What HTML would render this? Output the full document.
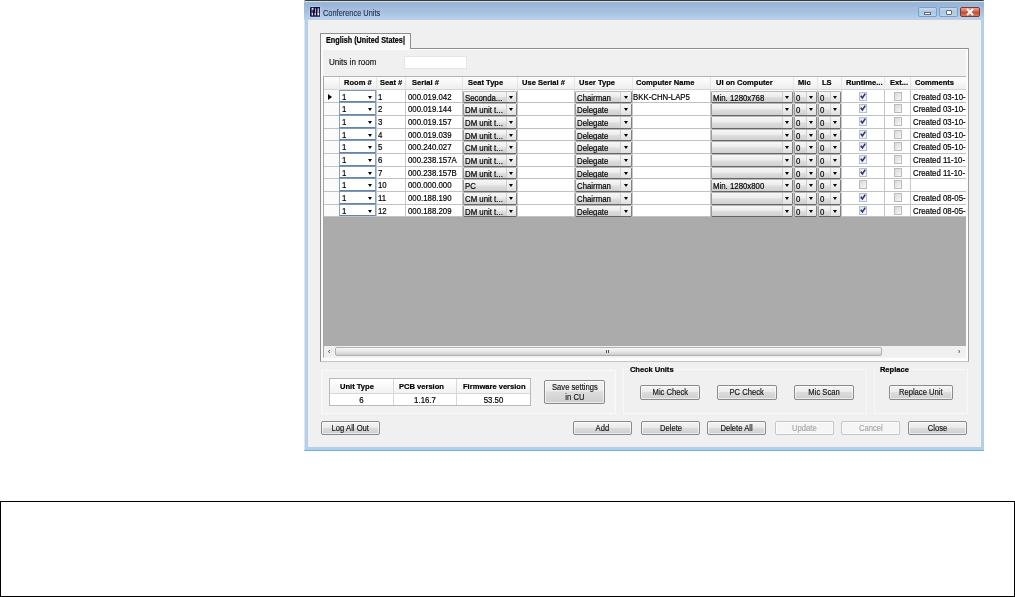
<!DOCTYPE html><html><head><meta charset="utf-8"><title>Conference Units</title><style>
html,body{margin:0;padding:0;background:#fff;}
body{width:1015px;height:597px;position:relative;overflow:hidden;font-family:"Liberation Sans",sans-serif;font-size:8px;color:#000;}
div,span{box-sizing:border-box;}
.a{position:absolute;white-space:nowrap;}
.wrap{left:0;top:0;width:1015px;height:470px;filter:blur(.4px);}
.win{left:304px;top:0;width:680px;height:451px;background:#b4cfe9;box-shadow:inset 1px 0 0 #dde8f2;border-top:1px solid #3a3a3a;border-radius:2px 1px 0 0;}
.tbar{left:0;top:0;width:680px;height:19px;background:linear-gradient(#98b6d6 0%,#9ab7d8 22%,#a8bcdb 36%,#a3bee0 50%,#b3cfec 88%,#c0d0e8 100%);border-top:1px solid #d3e1ec;border-radius:2px 1px 0 0;}
.client{left:4px;top:19px;width:673px;height:427px;background:#f0f0f0;}
.bot{left:0;top:449px;width:680px;height:1px;background:#62b8d8;}
.title{left:19px;top:6px;font-size:9.4px;line-height:12px;color:#1b2b44;-webkit-text-stroke:.1px #1b2b44;transform-origin:0 0;transform:scaleX(.79);}
.btn{border:1px solid #8a8a8a;border-radius:2px;background:linear-gradient(#f4f4f4 0%,#ebebeb 45%,#dcdcdc 50%,#cfcfcf 100%);text-align:center;font-size:8px;color:#111;box-shadow:inset 0 0 0 1px rgba(255,255,255,.6);}
.btn span{display:inline-block;font-size:8.3px;transform:scaleX(.92);-webkit-text-stroke:.15px currentColor;}
.btn.dis{color:#a5a5a5;border-color:#c6c6c6;background:#f5f5f5;}
.hd{font-weight:bold;font-size:8px;line-height:14px;color:#000;transform-origin:0 50%;transform:scaleX(.945);-webkit-text-stroke:.2px #000;}
.hd.c{transform-origin:50% 50%;}
.cell{font-size:8.6px;line-height:12px;color:#000;-webkit-text-stroke:.2px #000;transform-origin:0 50%;transform:scaleX(.91);}
.cell.c{transform-origin:50% 50%;}
.cbx{border:1px solid #9a9a9a;border-top-color:#b8b8b8;border-right-color:#808080;border-bottom-color:#666;border-radius:1.5px;background:linear-gradient(#f7f7f7 0%,#ececec 45%,#dedede 55%,#d0d0d0 100%);overflow:hidden;}
.cbt{font-size:8.6px;line-height:10px;color:#000;-webkit-text-stroke:.2px #000;left:.7px;top:0.6px;transform-origin:0 50%;transform:scaleX(.91);}
.cba{top:0;right:0;height:100%;background:linear-gradient(#f8f8f8,#ededed 50%,#e0e0e0);border-left:1px solid #cfcfcf;}
.arr{width:0;height:0;border-left:2.8px solid transparent;border-right:2.8px solid transparent;border-top:3.2px solid #000;}
.chk{width:8px;height:8.5px;border:1px solid #b4bfd4;background:linear-gradient(135deg,#dde3ee,#f7f9fc);}
.chk.off{border-color:#bcbcbc;background:linear-gradient(135deg,#dadada,#f6f6f6);}
</style></head><body>
<div class="a wrap">
<div class="a win">
<div class="a tbar"></div>
<svg class="a" style="left:5.5px;top:6.2px;filter:drop-shadow(0 0 1.2px rgba(225,235,250,.9))" width="10.5" height="9.8" viewBox="0 0 10.5 9.8"><rect x="0" y="0" width="10.5" height="9.8" rx="1" fill="#10103c"/><rect x="1.6" y="0.9" width="1.9" height="1.9" fill="#e6e6fa"/><rect x="1.6" y="2.6" width=".9" height="5.8" fill="#8d8fc4"/><rect x="5" y="1.3" width=".9" height="4.4" fill="#b9bbe8"/><rect x="7.5" y="1.3" width="1.6" height="4.4" fill="#b4b6e4"/><rect x="1.8" y="6" width="1.2" height="2.4" fill="#d8d8f4"/><rect x="4.5" y="6" width="1.3" height="2.4" fill="#dedef6"/><rect x="7.4" y="5.8" width="1.8" height="2.6" fill="#f4f4ff"/></svg>
<div class="a title">Conference Units</div>
<div class="a" style="left:614px;top:6px;width:19px;height:10px;border:1px solid #7f9fc2;border-radius:2px;background:linear-gradient(#c7dbf0,#a9c6e6 50%,#bcd5ee);"></div>
<div class="a" style="left:620px;top:11px;width:7px;height:3px;background:#fff;border:0.5px solid #667;"></div>
<div class="a" style="left:635px;top:6px;width:19px;height:10px;border:1px solid #7f9fc2;border-radius:2px;background:linear-gradient(#c7dbf0,#a9c6e6 50%,#bcd5ee);"></div>
<div class="a" style="left:642px;top:8.5px;width:6px;height:5px;background:#fff;border:1px solid #667;border-radius:1px;"></div>
<div class="a" style="left:656px;top:6px;width:20px;height:10px;border:1px solid #7a3a30;border-radius:2px;background:linear-gradient(#e9a48f,#d2624a 45%,#c2432a 50%,#d8795a);"></div>
<svg class="a" style="left:662px;top:7px" width="8" height="8" viewBox="0 0 8 8"><path d="M1 1 L7 7 M7 1 L1 7" stroke="#fff" stroke-width="2"/></svg>
<div class="a client"></div>
<div class="a bot"></div>
</div>
<div class="a" style="left:320px;top:48px;width:649px;height:314px;border:1px solid #8e8e8e;border-bottom-color:#c4c4c4;border-right-color:#a0a0a0;background:#fcfcfc;"></div>
<div class="a" style="left:323px;top:50px;width:643px;height:308px;background:#f0f0f0;"></div>
<div class="a" style="left:320px;top:33px;width:91px;height:16px;border:1px solid #8e8e8e;border-bottom:none;background:#fafafa;"></div>
<div class="a hd" style="left:326px;top:34px;font-size:8.2px;line-height:14px;transform-origin:0 0;transform:scaleX(.885)">English (United States|</div>
<div class="a" style="left:329px;top:56px;font-size:8.8px;line-height:12px;color:#111;-webkit-text-stroke:.15px #111;transform-origin:0 50%;transform:scaleX(.917);">Units in room</div>
<div class="a" style="left:404px;top:56px;width:63px;height:13px;background:#fff;border:1px solid #e2e6ea;"></div>
<div class="a" style="left:323px;top:76px;width:643px;height:282px;background:#ababab;border:1px solid #8c8c8c;border-top-color:#b4b4b4;border-left-color:#a4a4a4;border-right:none;border-bottom-color:#f4f4f4;"></div>
<div class="a" style="left:324px;top:77px;width:642px;height:13px;background:linear-gradient(#ffffff,#f4f5f6 60%,#eceef0);border-bottom:1px solid #d5d5d5;"></div>
<div class="a" style="left:324px;top:90px;width:642px;height:126px;background:#fff;"></div>
<div class="a" style="left:324px;top:90px;width:15px;height:126px;background:#fbfbfb;"></div>
<div class="a hd" style="left:344px;top:76.3px;">Room #</div>
<div class="a hd" style="left:380px;top:76.3px;">Seat #</div>
<div class="a hd" style="left:411.5px;top:76.3px;">Serial #</div>
<div class="a hd" style="left:468px;top:76.3px;">Seat Type</div>
<div class="a hd" style="left:521.5px;top:76.3px;">Use Serial #</div>
<div class="a hd" style="left:578.5px;top:76.3px;">User Type</div>
<div class="a hd" style="left:635.5px;top:76.3px;">Computer Name</div>
<div class="a hd" style="left:715.5px;top:76.3px;">UI on Computer</div>
<div class="a hd" style="left:797.8px;top:76.3px;">Mic</div>
<div class="a hd" style="left:822px;top:76.3px;">LS</div>
<div class="a hd" style="left:846px;top:76.3px;">Runtime...</div>
<div class="a hd" style="left:889.8px;top:76.3px;">Ext...</div>
<div class="a hd" style="left:915px;top:76.3px;">Comments</div>
<div class="a" style="left:339px;top:77px;width:1px;height:13px;background:#e3e4e6;"></div>
<div class="a" style="left:376px;top:77px;width:1px;height:13px;background:#e3e4e6;"></div>
<div class="a" style="left:405px;top:77px;width:1px;height:13px;background:#e3e4e6;"></div>
<div class="a" style="left:462px;top:77px;width:1px;height:13px;background:#e3e4e6;"></div>
<div class="a" style="left:517px;top:77px;width:1px;height:13px;background:#e3e4e6;"></div>
<div class="a" style="left:574px;top:77px;width:1px;height:13px;background:#e3e4e6;"></div>
<div class="a" style="left:632px;top:77px;width:1px;height:13px;background:#e3e4e6;"></div>
<div class="a" style="left:710px;top:77px;width:1px;height:13px;background:#e3e4e6;"></div>
<div class="a" style="left:793px;top:77px;width:1px;height:13px;background:#e3e4e6;"></div>
<div class="a" style="left:817px;top:77px;width:1px;height:13px;background:#e3e4e6;"></div>
<div class="a" style="left:841px;top:77px;width:1px;height:13px;background:#e3e4e6;"></div>
<div class="a" style="left:884px;top:77px;width:1px;height:13px;background:#e3e4e6;"></div>
<div class="a" style="left:910px;top:77px;width:1px;height:13px;background:#e3e4e6;"></div>
<div class="a" style="left:324px;top:102px;width:642px;height:1px;background:#c2c2c2;"></div>
<div class="a" style="left:324px;top:115px;width:642px;height:1px;background:#c2c2c2;"></div>
<div class="a" style="left:324px;top:128px;width:642px;height:1px;background:#c2c2c2;"></div>
<div class="a" style="left:324px;top:140px;width:642px;height:1px;background:#c2c2c2;"></div>
<div class="a" style="left:324px;top:153px;width:642px;height:1px;background:#c2c2c2;"></div>
<div class="a" style="left:324px;top:166px;width:642px;height:1px;background:#c2c2c2;"></div>
<div class="a" style="left:324px;top:178px;width:642px;height:1px;background:#c2c2c2;"></div>
<div class="a" style="left:324px;top:191px;width:642px;height:1px;background:#c2c2c2;"></div>
<div class="a" style="left:324px;top:204px;width:642px;height:1px;background:#c2c2c2;"></div>
<div class="a" style="left:324px;top:216px;width:642px;height:1px;background:#c2c2c2;"></div>
<div class="a" style="left:339px;top:90px;width:1px;height:126px;background:#c6c6c6;"></div>
<div class="a" style="left:376px;top:90px;width:1px;height:126px;background:#c6c6c6;"></div>
<div class="a" style="left:405px;top:90px;width:1px;height:126px;background:#c6c6c6;"></div>
<div class="a" style="left:462px;top:90px;width:1px;height:126px;background:#c6c6c6;"></div>
<div class="a" style="left:517px;top:90px;width:1px;height:126px;background:#c6c6c6;"></div>
<div class="a" style="left:574px;top:90px;width:1px;height:126px;background:#c6c6c6;"></div>
<div class="a" style="left:632px;top:90px;width:1px;height:126px;background:#c6c6c6;"></div>
<div class="a" style="left:710px;top:90px;width:1px;height:126px;background:#c6c6c6;"></div>
<div class="a" style="left:793px;top:90px;width:1px;height:126px;background:#c6c6c6;"></div>
<div class="a" style="left:817px;top:90px;width:1px;height:126px;background:#c6c6c6;"></div>
<div class="a" style="left:841px;top:90px;width:1px;height:126px;background:#c6c6c6;"></div>
<div class="a" style="left:884px;top:90px;width:1px;height:126px;background:#c6c6c6;"></div>
<div class="a" style="left:910px;top:90px;width:1px;height:126px;background:#c6c6c6;"></div>
<div class="a" style="left:328px;top:94.3px;width:0;height:0;border-top:3px solid transparent;border-bottom:3px solid transparent;border-left:4px solid #000;"></div>
<div class="a" style="left:339px;top:90px;width:37px;height:12px;background:#fff;border:1px solid #8aa2bb;border-bottom-color:#6686a8;border-top-color:#7d98b5;"></div>
<div class="a cell" style="left:342px;top:91px;">1</div>
<div class="a arr" style="left:367.5px;top:95.7px;"></div>
<div class="a cell" style="left:378px;top:91px;">1</div>
<div class="a cell" style="left:408px;top:91px;">000.019.042</div>
<div class="a cbx" style="left:463px;top:91px;width:54px;height:12px;"><div class="a cbt">Seconda...</div><div class="a cba" style="width:10px;"></div></div>
<div class="a arr" style="left:509.0px;top:95.5px;"></div>
<div class="a cbx" style="left:575px;top:91px;width:57px;height:12px;"><div class="a cbt">Chairman</div><div class="a cba" style="width:11px;"></div></div>
<div class="a arr" style="left:623.5px;top:95.5px;"></div>
<div class="a cell" style="left:633px;top:91px;">BKK-CHN-LAP5</div>
<div class="a cbx" style="left:711px;top:91px;width:82px;height:12px;"><div class="a cbt">Min. 1280x768</div><div class="a cba" style="width:10px;"></div></div>
<div class="a arr" style="left:785.0px;top:95.5px;"></div>
<div class="a cbx" style="left:794px;top:91px;width:23px;height:12px;"><div class="a cbt">0</div><div class="a cba" style="width:10px;"></div></div>
<div class="a arr" style="left:809.0px;top:95.5px;"></div>
<div class="a cbx" style="left:818px;top:91px;width:23px;height:12px;"><div class="a cbt">0</div><div class="a cba" style="width:10px;"></div></div>
<div class="a arr" style="left:833.0px;top:95.5px;"></div>
<div class="a chk" style="left:859px;top:92px;"></div>
<svg class="a" style="left:859px;top:92px" width="8" height="8" viewBox="0 0 8 8"><path d="M1.8 3.8 L3.4 6 L6.3 1.6" fill="none" stroke="#2b2f75" stroke-width="1.5"/></svg>
<div class="a chk off" style="left:893.5px;top:92px;"></div>
<div class="a cell" style="left:913px;top:91px;width:58.2px;overflow:hidden;">Created 03-10-</div>
<div class="a" style="left:339px;top:102px;width:37px;height:13px;background:#fff;border:1px solid #8aa2bb;border-bottom-color:#6686a8;border-top-color:#7d98b5;"></div>
<div class="a cell" style="left:342px;top:103px;">1</div>
<div class="a arr" style="left:367.5px;top:107.7px;"></div>
<div class="a cell" style="left:378px;top:103px;">2</div>
<div class="a cell" style="left:408px;top:103px;">000.019.144</div>
<div class="a cbx" style="left:463px;top:103px;width:54px;height:13px;"><div class="a cbt">DM unit t...</div><div class="a cba" style="width:10px;"></div></div>
<div class="a arr" style="left:509.0px;top:107.5px;"></div>
<div class="a cbx" style="left:575px;top:103px;width:57px;height:13px;"><div class="a cbt">Delegate</div><div class="a cba" style="width:11px;"></div></div>
<div class="a arr" style="left:623.5px;top:107.5px;"></div>
<div class="a cell" style="left:633px;top:103px;"></div>
<div class="a cbx" style="left:711px;top:103px;width:82px;height:13px;"><div class="a cbt"></div><div class="a cba" style="width:10px;"></div></div>
<div class="a arr" style="left:785.0px;top:107.5px;"></div>
<div class="a cbx" style="left:794px;top:103px;width:23px;height:13px;"><div class="a cbt">0</div><div class="a cba" style="width:10px;"></div></div>
<div class="a arr" style="left:809.0px;top:107.5px;"></div>
<div class="a cbx" style="left:818px;top:103px;width:23px;height:13px;"><div class="a cbt">0</div><div class="a cba" style="width:10px;"></div></div>
<div class="a arr" style="left:833.0px;top:107.5px;"></div>
<div class="a chk" style="left:859px;top:104px;"></div>
<svg class="a" style="left:859px;top:104px" width="8" height="8" viewBox="0 0 8 8"><path d="M1.8 3.8 L3.4 6 L6.3 1.6" fill="none" stroke="#2b2f75" stroke-width="1.5"/></svg>
<div class="a chk off" style="left:893.5px;top:104px;"></div>
<div class="a cell" style="left:913px;top:103px;width:58.2px;overflow:hidden;">Created 03-10-</div>
<div class="a" style="left:339px;top:115px;width:37px;height:13px;background:#fff;border:1px solid #8aa2bb;border-bottom-color:#6686a8;border-top-color:#7d98b5;"></div>
<div class="a cell" style="left:342px;top:116px;">1</div>
<div class="a arr" style="left:367.5px;top:120.7px;"></div>
<div class="a cell" style="left:378px;top:116px;">3</div>
<div class="a cell" style="left:408px;top:116px;">000.019.157</div>
<div class="a cbx" style="left:463px;top:116px;width:54px;height:13px;"><div class="a cbt">DM unit t...</div><div class="a cba" style="width:10px;"></div></div>
<div class="a arr" style="left:509.0px;top:120.5px;"></div>
<div class="a cbx" style="left:575px;top:116px;width:57px;height:13px;"><div class="a cbt">Delegate</div><div class="a cba" style="width:11px;"></div></div>
<div class="a arr" style="left:623.5px;top:120.5px;"></div>
<div class="a cell" style="left:633px;top:116px;"></div>
<div class="a cbx" style="left:711px;top:116px;width:82px;height:13px;"><div class="a cbt"></div><div class="a cba" style="width:10px;"></div></div>
<div class="a arr" style="left:785.0px;top:120.5px;"></div>
<div class="a cbx" style="left:794px;top:116px;width:23px;height:13px;"><div class="a cbt">0</div><div class="a cba" style="width:10px;"></div></div>
<div class="a arr" style="left:809.0px;top:120.5px;"></div>
<div class="a cbx" style="left:818px;top:116px;width:23px;height:13px;"><div class="a cbt">0</div><div class="a cba" style="width:10px;"></div></div>
<div class="a arr" style="left:833.0px;top:120.5px;"></div>
<div class="a chk" style="left:859px;top:117px;"></div>
<svg class="a" style="left:859px;top:117px" width="8" height="8" viewBox="0 0 8 8"><path d="M1.8 3.8 L3.4 6 L6.3 1.6" fill="none" stroke="#2b2f75" stroke-width="1.5"/></svg>
<div class="a chk off" style="left:893.5px;top:117px;"></div>
<div class="a cell" style="left:913px;top:116px;width:58.2px;overflow:hidden;">Created 03-10-</div>
<div class="a" style="left:339px;top:128px;width:37px;height:12px;background:#fff;border:1px solid #8aa2bb;border-bottom-color:#6686a8;border-top-color:#7d98b5;"></div>
<div class="a cell" style="left:342px;top:129px;">1</div>
<div class="a arr" style="left:367.5px;top:133.7px;"></div>
<div class="a cell" style="left:378px;top:129px;">4</div>
<div class="a cell" style="left:408px;top:129px;">000.019.039</div>
<div class="a cbx" style="left:463px;top:129px;width:54px;height:12px;"><div class="a cbt">DM unit t...</div><div class="a cba" style="width:10px;"></div></div>
<div class="a arr" style="left:509.0px;top:133.5px;"></div>
<div class="a cbx" style="left:575px;top:129px;width:57px;height:12px;"><div class="a cbt">Delegate</div><div class="a cba" style="width:11px;"></div></div>
<div class="a arr" style="left:623.5px;top:133.5px;"></div>
<div class="a cell" style="left:633px;top:129px;"></div>
<div class="a cbx" style="left:711px;top:129px;width:82px;height:12px;"><div class="a cbt"></div><div class="a cba" style="width:10px;"></div></div>
<div class="a arr" style="left:785.0px;top:133.5px;"></div>
<div class="a cbx" style="left:794px;top:129px;width:23px;height:12px;"><div class="a cbt">0</div><div class="a cba" style="width:10px;"></div></div>
<div class="a arr" style="left:809.0px;top:133.5px;"></div>
<div class="a cbx" style="left:818px;top:129px;width:23px;height:12px;"><div class="a cbt">0</div><div class="a cba" style="width:10px;"></div></div>
<div class="a arr" style="left:833.0px;top:133.5px;"></div>
<div class="a chk" style="left:859px;top:130px;"></div>
<svg class="a" style="left:859px;top:130px" width="8" height="8" viewBox="0 0 8 8"><path d="M1.8 3.8 L3.4 6 L6.3 1.6" fill="none" stroke="#2b2f75" stroke-width="1.5"/></svg>
<div class="a chk off" style="left:893.5px;top:130px;"></div>
<div class="a cell" style="left:913px;top:129px;width:58.2px;overflow:hidden;">Created 03-10-</div>
<div class="a" style="left:339px;top:140px;width:37px;height:13px;background:#fff;border:1px solid #8aa2bb;border-bottom-color:#6686a8;border-top-color:#7d98b5;"></div>
<div class="a cell" style="left:342px;top:141px;">1</div>
<div class="a arr" style="left:367.5px;top:145.7px;"></div>
<div class="a cell" style="left:378px;top:141px;">5</div>
<div class="a cell" style="left:408px;top:141px;">000.240.027</div>
<div class="a cbx" style="left:463px;top:141px;width:54px;height:13px;"><div class="a cbt">CM unit t...</div><div class="a cba" style="width:10px;"></div></div>
<div class="a arr" style="left:509.0px;top:145.5px;"></div>
<div class="a cbx" style="left:575px;top:141px;width:57px;height:13px;"><div class="a cbt">Delegate</div><div class="a cba" style="width:11px;"></div></div>
<div class="a arr" style="left:623.5px;top:145.5px;"></div>
<div class="a cell" style="left:633px;top:141px;"></div>
<div class="a cbx" style="left:711px;top:141px;width:82px;height:13px;"><div class="a cbt"></div><div class="a cba" style="width:10px;"></div></div>
<div class="a arr" style="left:785.0px;top:145.5px;"></div>
<div class="a cbx" style="left:794px;top:141px;width:23px;height:13px;"><div class="a cbt">0</div><div class="a cba" style="width:10px;"></div></div>
<div class="a arr" style="left:809.0px;top:145.5px;"></div>
<div class="a cbx" style="left:818px;top:141px;width:23px;height:13px;"><div class="a cbt">0</div><div class="a cba" style="width:10px;"></div></div>
<div class="a arr" style="left:833.0px;top:145.5px;"></div>
<div class="a chk" style="left:859px;top:142px;"></div>
<svg class="a" style="left:859px;top:142px" width="8" height="8" viewBox="0 0 8 8"><path d="M1.8 3.8 L3.4 6 L6.3 1.6" fill="none" stroke="#2b2f75" stroke-width="1.5"/></svg>
<div class="a chk off" style="left:893.5px;top:142px;"></div>
<div class="a cell" style="left:913px;top:141px;width:58.2px;overflow:hidden;">Created 05-10-</div>
<div class="a" style="left:339px;top:153px;width:37px;height:13px;background:#fff;border:1px solid #8aa2bb;border-bottom-color:#6686a8;border-top-color:#7d98b5;"></div>
<div class="a cell" style="left:342px;top:154px;">1</div>
<div class="a arr" style="left:367.5px;top:158.7px;"></div>
<div class="a cell" style="left:378px;top:154px;">6</div>
<div class="a cell" style="left:408px;top:154px;">000.238.157A</div>
<div class="a cbx" style="left:463px;top:154px;width:54px;height:13px;"><div class="a cbt">DM unit t...</div><div class="a cba" style="width:10px;"></div></div>
<div class="a arr" style="left:509.0px;top:158.5px;"></div>
<div class="a cbx" style="left:575px;top:154px;width:57px;height:13px;"><div class="a cbt">Delegate</div><div class="a cba" style="width:11px;"></div></div>
<div class="a arr" style="left:623.5px;top:158.5px;"></div>
<div class="a cell" style="left:633px;top:154px;"></div>
<div class="a cbx" style="left:711px;top:154px;width:82px;height:13px;"><div class="a cbt"></div><div class="a cba" style="width:10px;"></div></div>
<div class="a arr" style="left:785.0px;top:158.5px;"></div>
<div class="a cbx" style="left:794px;top:154px;width:23px;height:13px;"><div class="a cbt">0</div><div class="a cba" style="width:10px;"></div></div>
<div class="a arr" style="left:809.0px;top:158.5px;"></div>
<div class="a cbx" style="left:818px;top:154px;width:23px;height:13px;"><div class="a cbt">0</div><div class="a cba" style="width:10px;"></div></div>
<div class="a arr" style="left:833.0px;top:158.5px;"></div>
<div class="a chk" style="left:859px;top:155px;"></div>
<svg class="a" style="left:859px;top:155px" width="8" height="8" viewBox="0 0 8 8"><path d="M1.8 3.8 L3.4 6 L6.3 1.6" fill="none" stroke="#2b2f75" stroke-width="1.5"/></svg>
<div class="a chk off" style="left:893.5px;top:155px;"></div>
<div class="a cell" style="left:913px;top:154px;width:58.2px;overflow:hidden;">Created 11-10-</div>
<div class="a" style="left:339px;top:166px;width:37px;height:12px;background:#fff;border:1px solid #8aa2bb;border-bottom-color:#6686a8;border-top-color:#7d98b5;"></div>
<div class="a cell" style="left:342px;top:167px;">1</div>
<div class="a arr" style="left:367.5px;top:171.7px;"></div>
<div class="a cell" style="left:378px;top:167px;">7</div>
<div class="a cell" style="left:408px;top:167px;">000.238.157B</div>
<div class="a cbx" style="left:463px;top:167px;width:54px;height:12px;"><div class="a cbt">DM unit t...</div><div class="a cba" style="width:10px;"></div></div>
<div class="a arr" style="left:509.0px;top:171.5px;"></div>
<div class="a cbx" style="left:575px;top:167px;width:57px;height:12px;"><div class="a cbt">Delegate</div><div class="a cba" style="width:11px;"></div></div>
<div class="a arr" style="left:623.5px;top:171.5px;"></div>
<div class="a cell" style="left:633px;top:167px;"></div>
<div class="a cbx" style="left:711px;top:167px;width:82px;height:12px;"><div class="a cbt"></div><div class="a cba" style="width:10px;"></div></div>
<div class="a arr" style="left:785.0px;top:171.5px;"></div>
<div class="a cbx" style="left:794px;top:167px;width:23px;height:12px;"><div class="a cbt">0</div><div class="a cba" style="width:10px;"></div></div>
<div class="a arr" style="left:809.0px;top:171.5px;"></div>
<div class="a cbx" style="left:818px;top:167px;width:23px;height:12px;"><div class="a cbt">0</div><div class="a cba" style="width:10px;"></div></div>
<div class="a arr" style="left:833.0px;top:171.5px;"></div>
<div class="a chk" style="left:859px;top:168px;"></div>
<svg class="a" style="left:859px;top:168px" width="8" height="8" viewBox="0 0 8 8"><path d="M1.8 3.8 L3.4 6 L6.3 1.6" fill="none" stroke="#2b2f75" stroke-width="1.5"/></svg>
<div class="a chk off" style="left:893.5px;top:168px;"></div>
<div class="a cell" style="left:913px;top:167px;width:58.2px;overflow:hidden;">Created 11-10-</div>
<div class="a" style="left:339px;top:178px;width:37px;height:13px;background:#fff;border:1px solid #8aa2bb;border-bottom-color:#6686a8;border-top-color:#7d98b5;"></div>
<div class="a cell" style="left:342px;top:179px;">1</div>
<div class="a arr" style="left:367.5px;top:183.7px;"></div>
<div class="a cell" style="left:378px;top:179px;">10</div>
<div class="a cell" style="left:408px;top:179px;">000.000.000</div>
<div class="a cbx" style="left:463px;top:179px;width:54px;height:13px;"><div class="a cbt">PC</div><div class="a cba" style="width:10px;"></div></div>
<div class="a arr" style="left:509.0px;top:183.5px;"></div>
<div class="a cbx" style="left:575px;top:179px;width:57px;height:13px;"><div class="a cbt">Chairman</div><div class="a cba" style="width:11px;"></div></div>
<div class="a arr" style="left:623.5px;top:183.5px;"></div>
<div class="a cell" style="left:633px;top:179px;"></div>
<div class="a cbx" style="left:711px;top:179px;width:82px;height:13px;"><div class="a cbt">Min. 1280x800</div><div class="a cba" style="width:10px;"></div></div>
<div class="a arr" style="left:785.0px;top:183.5px;"></div>
<div class="a cbx" style="left:794px;top:179px;width:23px;height:13px;"><div class="a cbt">0</div><div class="a cba" style="width:10px;"></div></div>
<div class="a arr" style="left:809.0px;top:183.5px;"></div>
<div class="a cbx" style="left:818px;top:179px;width:23px;height:13px;"><div class="a cbt">0</div><div class="a cba" style="width:10px;"></div></div>
<div class="a arr" style="left:833.0px;top:183.5px;"></div>
<div class="a chk off" style="left:859px;top:180px;"></div>
<div class="a chk off" style="left:893.5px;top:180px;"></div>
<div class="a cell" style="left:913px;top:179px;width:58.2px;overflow:hidden;"></div>
<div class="a" style="left:339px;top:191px;width:37px;height:13px;background:#fff;border:1px solid #8aa2bb;border-bottom-color:#6686a8;border-top-color:#7d98b5;"></div>
<div class="a cell" style="left:342px;top:192px;">1</div>
<div class="a arr" style="left:367.5px;top:196.7px;"></div>
<div class="a cell" style="left:378px;top:192px;">11</div>
<div class="a cell" style="left:408px;top:192px;">000.188.190</div>
<div class="a cbx" style="left:463px;top:192px;width:54px;height:13px;"><div class="a cbt">CM unit t...</div><div class="a cba" style="width:10px;"></div></div>
<div class="a arr" style="left:509.0px;top:196.5px;"></div>
<div class="a cbx" style="left:575px;top:192px;width:57px;height:13px;"><div class="a cbt">Chairman</div><div class="a cba" style="width:11px;"></div></div>
<div class="a arr" style="left:623.5px;top:196.5px;"></div>
<div class="a cell" style="left:633px;top:192px;"></div>
<div class="a cbx" style="left:711px;top:192px;width:82px;height:13px;"><div class="a cbt"></div><div class="a cba" style="width:10px;"></div></div>
<div class="a arr" style="left:785.0px;top:196.5px;"></div>
<div class="a cbx" style="left:794px;top:192px;width:23px;height:13px;"><div class="a cbt">0</div><div class="a cba" style="width:10px;"></div></div>
<div class="a arr" style="left:809.0px;top:196.5px;"></div>
<div class="a cbx" style="left:818px;top:192px;width:23px;height:13px;"><div class="a cbt">0</div><div class="a cba" style="width:10px;"></div></div>
<div class="a arr" style="left:833.0px;top:196.5px;"></div>
<div class="a chk" style="left:859px;top:193px;"></div>
<svg class="a" style="left:859px;top:193px" width="8" height="8" viewBox="0 0 8 8"><path d="M1.8 3.8 L3.4 6 L6.3 1.6" fill="none" stroke="#2b2f75" stroke-width="1.5"/></svg>
<div class="a chk off" style="left:893.5px;top:193px;"></div>
<div class="a cell" style="left:913px;top:192px;width:58.2px;overflow:hidden;">Created 08-05-</div>
<div class="a" style="left:339px;top:204px;width:37px;height:12px;background:#fff;border:1px solid #8aa2bb;border-bottom-color:#6686a8;border-top-color:#7d98b5;"></div>
<div class="a cell" style="left:342px;top:205px;">1</div>
<div class="a arr" style="left:367.5px;top:209.7px;"></div>
<div class="a cell" style="left:378px;top:205px;">12</div>
<div class="a cell" style="left:408px;top:205px;">000.188.209</div>
<div class="a cbx" style="left:463px;top:205px;width:54px;height:12px;"><div class="a cbt">DM unit t...</div><div class="a cba" style="width:10px;"></div></div>
<div class="a arr" style="left:509.0px;top:209.5px;"></div>
<div class="a cbx" style="left:575px;top:205px;width:57px;height:12px;"><div class="a cbt">Delegate</div><div class="a cba" style="width:11px;"></div></div>
<div class="a arr" style="left:623.5px;top:209.5px;"></div>
<div class="a cell" style="left:633px;top:205px;"></div>
<div class="a cbx" style="left:711px;top:205px;width:82px;height:12px;"><div class="a cbt"></div><div class="a cba" style="width:10px;"></div></div>
<div class="a arr" style="left:785.0px;top:209.5px;"></div>
<div class="a cbx" style="left:794px;top:205px;width:23px;height:12px;"><div class="a cbt">0</div><div class="a cba" style="width:10px;"></div></div>
<div class="a arr" style="left:809.0px;top:209.5px;"></div>
<div class="a cbx" style="left:818px;top:205px;width:23px;height:12px;"><div class="a cbt">0</div><div class="a cba" style="width:10px;"></div></div>
<div class="a arr" style="left:833.0px;top:209.5px;"></div>
<div class="a chk" style="left:859px;top:206px;"></div>
<svg class="a" style="left:859px;top:206px" width="8" height="8" viewBox="0 0 8 8"><path d="M1.8 3.8 L3.4 6 L6.3 1.6" fill="none" stroke="#2b2f75" stroke-width="1.5"/></svg>
<div class="a chk off" style="left:893.5px;top:206px;"></div>
<div class="a cell" style="left:913px;top:205px;width:58.2px;overflow:hidden;">Created 08-05-</div>
<div class="a" style="left:324px;top:346px;width:642px;height:11px;background:#f0f0f0;"></div>
<div class="a" style="left:335px;top:347px;width:547px;height:9px;border:1px solid #b0b0b0;border-radius:2px;background:linear-gradient(#f8f8f8,#e6e6e6 50%,#cecece);"></div>
<div class="a" style="left:606px;top:350px;width:1px;height:3px;background:#555;"></div><div class="a" style="left:608px;top:350px;width:1px;height:3px;background:#555;"></div>
<div class="a" style="left:328px;top:347px;font-size:7px;line-height:9px;color:#222;">‹</div>
<div class="a" style="left:958px;top:347px;font-size:7px;line-height:9px;color:#222;">›</div>
<div class="a" style="left:321px;top:370px;width:295px;height:44px;background:#f2f2f2;border:1px solid #f9f9f9;"></div>
<div class="a" style="left:329px;top:378px;width:202px;height:28px;background:#fff;border:1px solid #b9b9b9;"></div>
<div class="a" style="left:330px;top:379px;width:200px;height:15px;background:linear-gradient(#fff,#f1f2f4);border-bottom:1px solid #d8d8d8;"></div>
<div class="a" style="left:393px;top:379px;width:1px;height:26px;background:#d8d8d8;"></div><div class="a" style="left:456px;top:379px;width:1px;height:26px;background:#d8d8d8;"></div>
<div class="a hd" style="left:340px;top:380px;">Unit Type</div>
<div class="a hd" style="left:399px;top:380px;">PCB version</div>
<div class="a hd" style="left:462.6px;top:380px;">Firmware version</div>
<div class="a cell c" style="left:330px;top:394px;width:63px;text-align:center;">6</div>
<div class="a cell c" style="left:394px;top:394px;width:62px;text-align:center;">1.16.7</div>
<div class="a cell c" style="left:457px;top:394px;width:73px;text-align:center;">53.50</div>
<div class="a btn" style="left:544px;top:380px;width:61px;height:24px;line-height:9.5px;padding-top:2px;white-space:normal;"><span>Save settings<br>in CU</span></div>
<div class="a" style="left:623px;top:369px;width:244px;height:45px;border:1px solid #f8f8f8;"></div>
<div class="a hd" style="left:627.5px;top:363px;background:#f0f0f0;padding:0 2px;">Check Units</div>
<div class="a btn" style="left:640px;top:385px;width:60px;height:15px;line-height:13px;"><span>Mic Check</span></div>
<div class="a btn" style="left:717px;top:385px;width:60px;height:15px;line-height:13px;"><span>PC Check</span></div>
<div class="a btn" style="left:794px;top:385px;width:60px;height:15px;line-height:13px;"><span>Mic Scan</span></div>
<div class="a" style="left:874px;top:369px;width:94px;height:45px;border:1px solid #f8f8f8;"></div>
<div class="a hd" style="left:878px;top:363px;background:#f0f0f0;padding:0 2px;">Replace</div>
<div class="a btn" style="left:889px;top:385px;width:64px;height:15px;line-height:13px;"><span>Replace Unit</span></div>
<div class="a btn" style="left:321px;top:421px;width:59px;height:14px;line-height:12px;"><span>Log All Out</span></div>
<div class="a btn" style="left:573px;top:421px;width:59px;height:14px;line-height:12px;"><span>Add</span></div>
<div class="a btn" style="left:641px;top:421px;width:59px;height:14px;line-height:12px;"><span>Delete</span></div>
<div class="a btn" style="left:707px;top:421px;width:59px;height:14px;line-height:12px;"><span>Delete All</span></div>
<div class="a btn dis" style="left:775px;top:421px;width:59px;height:14px;line-height:12px;"><span>Update</span></div>
<div class="a btn dis" style="left:841px;top:421px;width:59px;height:14px;line-height:12px;"><span>Cancel</span></div>
<div class="a btn" style="left:908px;top:421px;width:59px;height:14px;line-height:12px;"><span>Close</span></div>
</div>
<div class="a" style="left:0;top:501px;width:1015px;height:96px;border:1px solid #000;background:#fff;"></div>
</body></html>
